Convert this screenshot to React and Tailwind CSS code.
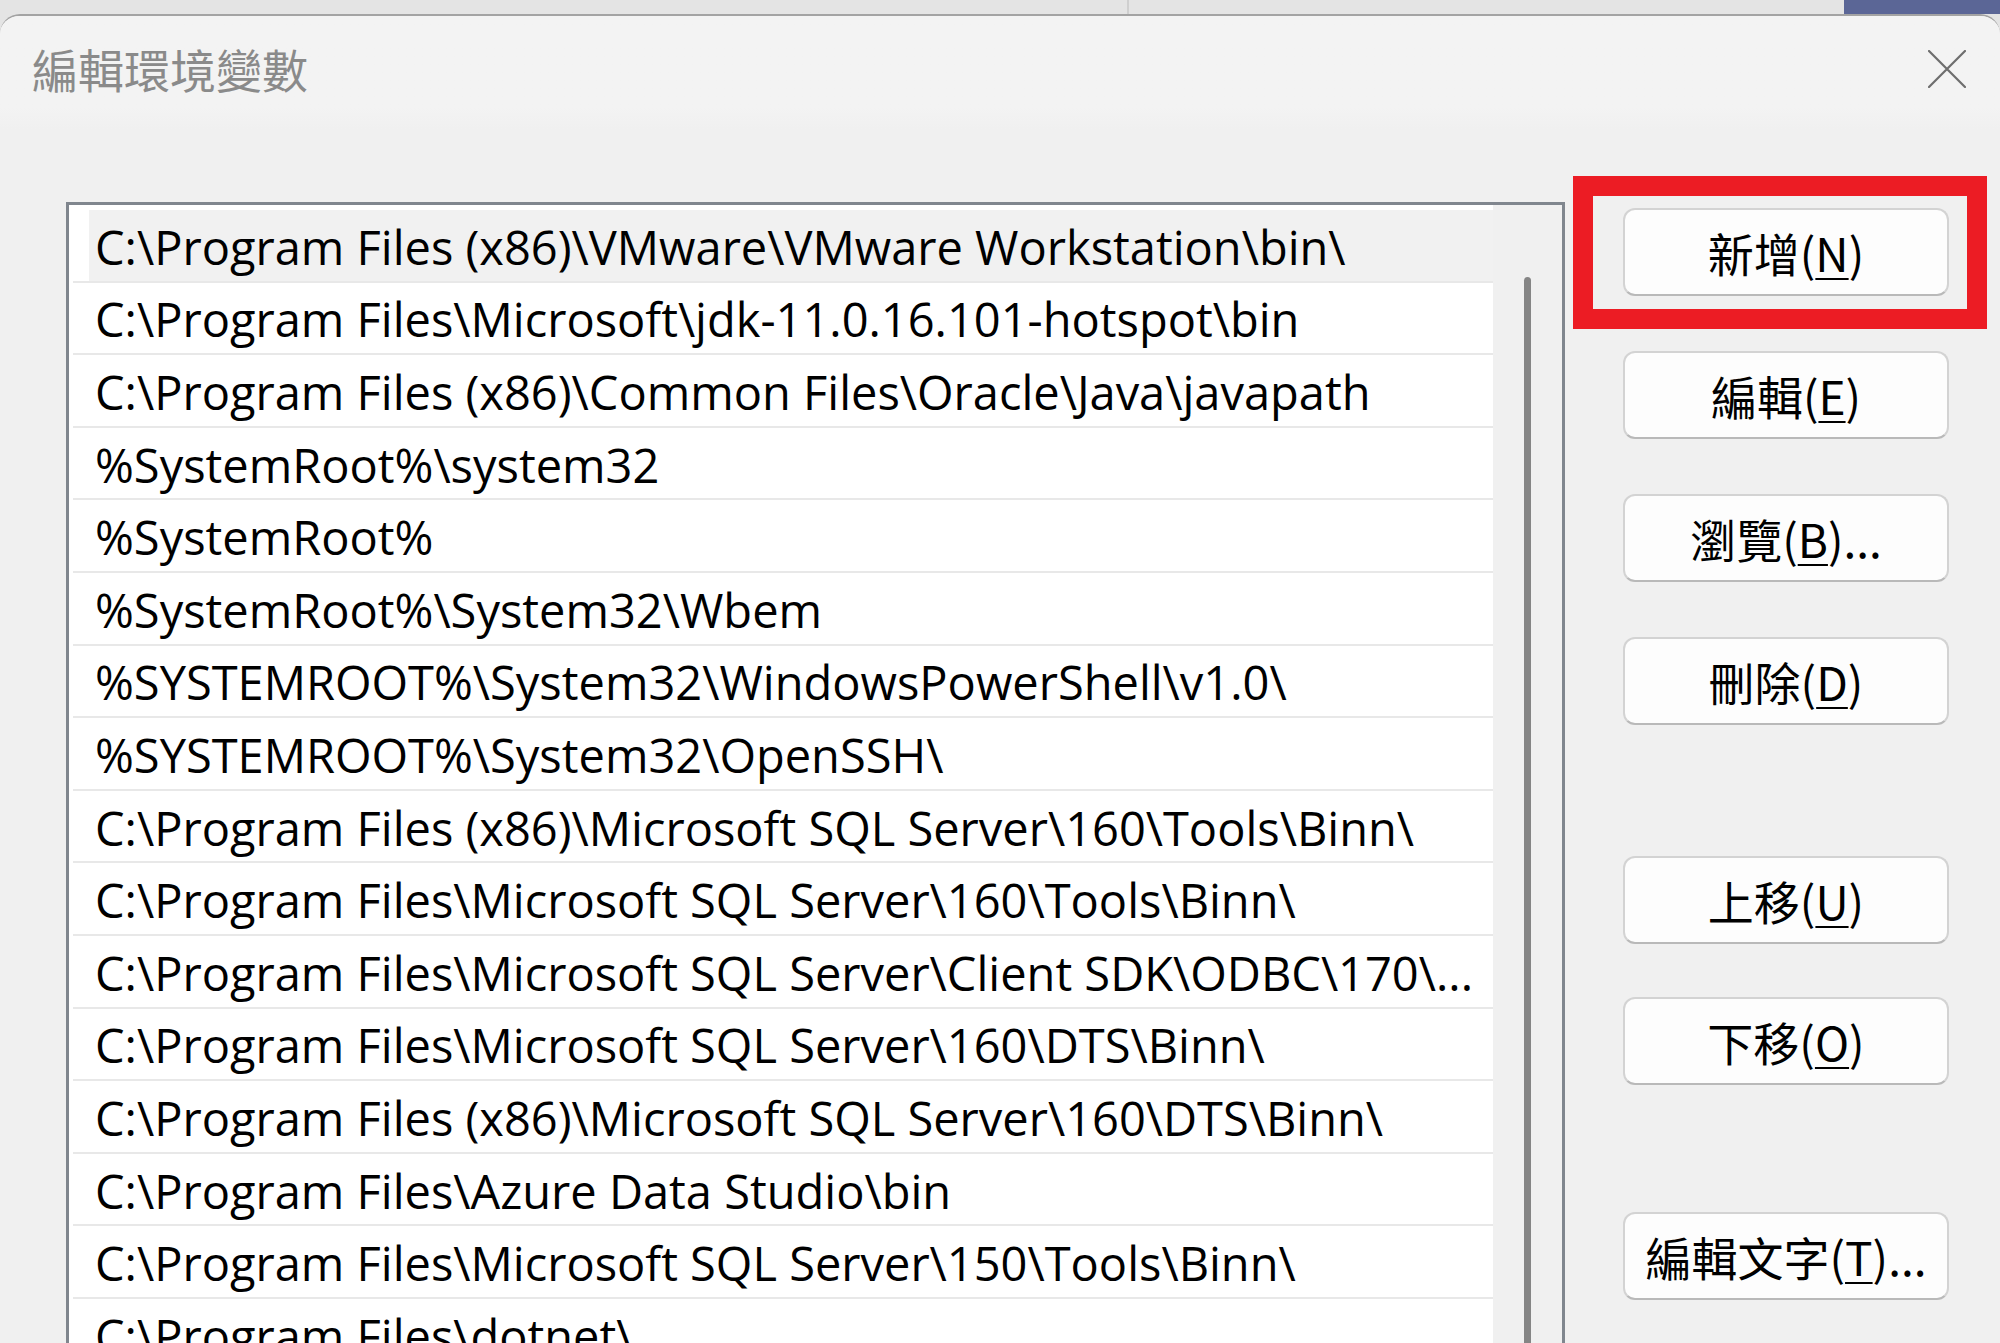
const paths = [
  "C:\\Program Files (x86)\\VMware\\VMware Workstation\\bin\\",
  "C:\\Program Files\\Microsoft\\jdk-11.0.16.101-hotspot\\bin",
  "C:\\Program Files (x86)\\Common Files\\Oracle\\Java\\javapath",
  "%SystemRoot%\\system32",
  "%SystemRoot%",
  "%SystemRoot%\\System32\\Wbem",
  "%SYSTEMROOT%\\System32\\WindowsPowerShell\\v1.0\\",
  "%SYSTEMROOT%\\System32\\OpenSSH\\",
  "C:\\Program Files (x86)\\Microsoft SQL Server\\160\\Tools\\Binn\\",
  "C:\\Program Files\\Microsoft SQL Server\\160\\Tools\\Binn\\",
  "C:\\Program Files\\Microsoft SQL Server\\Client SDK\\ODBC\\170\\...",
  "C:\\Program Files\\Microsoft SQL Server\\160\\DTS\\Binn\\",
  "C:\\Program Files (x86)\\Microsoft SQL Server\\160\\DTS\\Binn\\",
  "C:\\Program Files\\Azure Data Studio\\bin",
  "C:\\Program Files\\Microsoft SQL Server\\150\\Tools\\Binn\\",
  "C:\\Program Files\\dotnet\\",
];

function DialogButton({ label, hotkey, suffix = "", className = "" }) {
  return (
    <button
      type="button"
      className={`flex h-[88px] w-[326px] shrink-0 items-center justify-center rounded-[12px] border-2 border-[#d3d3d3] border-b-[#b9b9b9] bg-[#fdfdfd] font-['Noto_Sans_CJK_TC',sans-serif] text-[46px] leading-none text-black ${className}`}
    >
      {label}(<span className="underline decoration-2 underline-offset-[6px]">{hotkey}</span>){suffix}
    </button>
  );
}

export default function App() {
  return (
    <div className="relative h-[1343px] w-[2000px] overflow-hidden bg-[#e4e4e4]">
      <div className="flex h-[14px]">
        <div className="w-[1127px]" />
        <div className="w-[2px] bg-[#cfcfcf]" />
        <div className="flex-1" />
        <div className="w-[156px] bg-[#5b6696]" />
      </div>

      <div className="flex h-[1329px] flex-col overflow-hidden rounded-t-[20px] border-t-2 border-[#a3a3a3] bg-[#f0f0f0]">
        <div className="flex h-[114px] shrink-0 items-start justify-between bg-gradient-to-b from-[#f3f3f3] from-80% to-[#f0f0f0] pl-[32px] pr-[34px]">
          <div className="pt-[29px] font-['Noto_Sans_CJK_TC',sans-serif] text-[46px] leading-none text-[#8a8a8a]">
            編輯環境變數
          </div>
          <svg className="mt-[34px] h-[38px] w-[38px]" viewBox="0 0 38 38" fill="none">
            <path d="M1 1L37 37M37 1L1 37" stroke="#6e6e6e" strokeWidth="2.2" strokeLinecap="round" />
          </svg>
        </div>

        <div className="flex min-h-0 flex-1 pl-[66px]">
          <div className="mt-[72px] flex w-[1499px] border-[3px] border-b-0 border-[#80868e] bg-white">
            <div className="flex-1 pt-[5px]">
              {paths.map((p, i) => (
                <div key={i} className="ml-[4px] flex h-[72.6px] flex-col">
                  <div
                    className={`ml-[16px] flex min-h-0 flex-1 items-center pl-[6px] pt-[3px] font-['Open_Sans',sans-serif] text-[47px] leading-[60px] whitespace-nowrap text-black ${
                      i === 0 ? "bg-[#f1f1f1]" : ""
                    }`}
                  >
                    {p}
                  </div>
                  <div className="h-[2px] shrink-0 bg-[#e8e8e8]" />
                </div>
              ))}
            </div>
            <div className="w-[69px] bg-[#f0f0f0] pl-[31px] pt-[72px]">
              <div className="h-full w-[7px] rounded-t-full bg-[#858585]" />
            </div>
          </div>

          <div className="ml-[58px] flex flex-col pt-[78px]">
            <DialogButton label="新增" hotkey="N" />
            <DialogButton label="編輯" hotkey="E" className="mt-[55px]" />
            <DialogButton label="瀏覽" hotkey="B" suffix="..." className="mt-[55px]" />
            <DialogButton label="刪除" hotkey="D" className="mt-[55px]" />
            <DialogButton label="上移" hotkey="U" className="mt-[131px]" />
            <DialogButton label="下移" hotkey="O" className="mt-[53px]" />
            <DialogButton label="編輯文字" hotkey="T" suffix="..." className="mt-[127px]" />
          </div>
        </div>
      </div>

      <div className="absolute left-[1573px] top-[176px] h-[153px] w-[414px] border-[20px] border-[#ec1c24]" />
    </div>
  );
}
